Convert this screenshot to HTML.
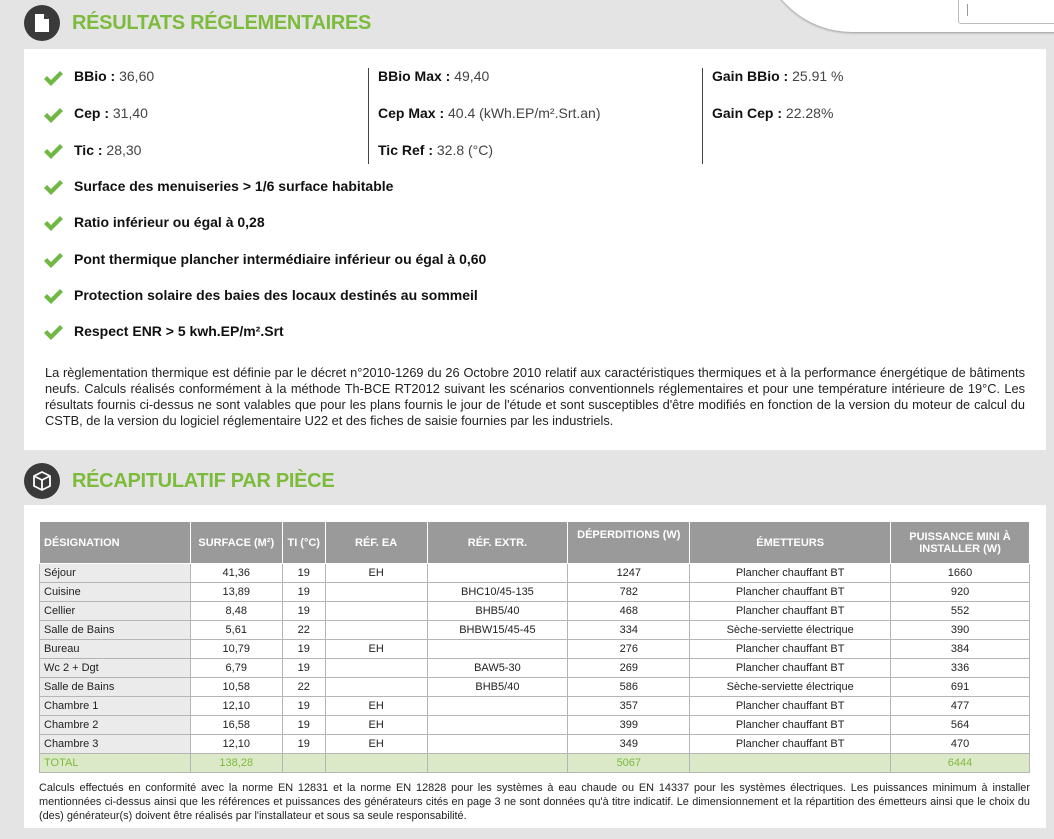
<!DOCTYPE html>
<html><head><meta charset="utf-8"><style>
body{margin:0;width:1054px;height:839px;background:#e4e4e4;font-family:"Liberation Sans",sans-serif;position:relative;overflow:hidden;color:#222}
.abs{position:absolute}
.title{position:absolute;font-size:20px;font-weight:bold;color:#7dbb3c;letter-spacing:-0.3px}
.icon{position:absolute;width:36px;height:36px;border-radius:50%;background:#3a3a3a}
.panel{position:absolute;background:#fff}
.row{position:absolute;font-size:14px;color:#222}
.row b{color:#111}
.row span{color:#444}
.chk{position:absolute;width:20px;height:16px}
p.note{position:absolute;margin:0;font-size:12.8px;line-height:16px;color:#222;text-align:justify}
table{position:absolute;border-collapse:collapse;font-size:11px;color:#222}
td,th{border:1px solid #b5b5b5;padding:0 4px;height:18px;text-align:center;white-space:nowrap;line-height:12px}
th{background:#9a9a9a;color:#fff;font-size:11px;font-weight:bold;height:34px;border-color:#fff;padding:0 4px}
td:first-child{text-align:left;background:#ebebeb}
tr.tot td{background:#dbe9c9;color:#7dbb3c}
</style></head><body>
<div class="abs" style="left:760px;top:-60px;width:300px;height:92px;background:#fff;border-radius:0 0 0 120px;box-shadow:0 1px 2px #999"></div>
<div class="abs" style="left:958px;top:-5px;width:100px;height:27px;background:#fff;border:1px solid #bbb;border-radius:3px"></div>
<div class="abs" style="left:967px;top:4px;width:1px;height:12px;background:#999"></div>

<div class="icon" style="left:24px;top:5px"></div>
<svg class="abs" style="left:33px;top:13px" width="18" height="20" viewBox="0 0 18 20"><path d="M2 1h9l5 5v13H2z" fill="#fff"/><path d="M11 1v5h5" fill="#3a3a3a"/></svg>
<div class="title" style="left:72px;top:12px">RÉSULTATS RÉGLEMENTAIRES</div>

<div class="panel" style="left:24px;top:49px;width:1022px;height:401px"></div>
<div class="abs" style="left:368px;top:68px;width:1px;height:96px;background:#444"></div>
<div class="abs" style="left:702px;top:68px;width:1px;height:96px;background:#444"></div>

<svg width="0" height="0" style="position:absolute"><defs><symbol id="c" viewBox="0 0 20 16"><path d="M1 9l3-3 4 4 9-9 3 3-12 12z" fill="#6fb843"/></symbol></defs></svg>
<svg class="chk" style="left:43px;top:70px"><use href="#c"/></svg>
<svg class="chk" style="left:43px;top:107px"><use href="#c"/></svg>
<svg class="chk" style="left:43px;top:143px"><use href="#c"/></svg>
<svg class="chk" style="left:43px;top:179px"><use href="#c"/></svg>
<svg class="chk" style="left:43px;top:215px"><use href="#c"/></svg>
<svg class="chk" style="left:43px;top:252px"><use href="#c"/></svg>
<svg class="chk" style="left:43px;top:288px"><use href="#c"/></svg>
<svg class="chk" style="left:43px;top:324px"><use href="#c"/></svg>

<div class="row" style="left:74px;top:68px"><b>BBio :</b> <span>36,60</span></div>
<div class="row" style="left:74px;top:105px"><b>Cep :</b> <span>31,40</span></div>
<div class="row" style="left:74px;top:142px"><b>Tic :</b> <span>28,30</span></div>
<div class="row" style="left:378px;top:68px"><b>BBio Max :</b> <span>49,40</span></div>
<div class="row" style="left:378px;top:105px"><b>Cep Max :</b> <span>40.4 (kWh.EP/m².Srt.an)</span></div>
<div class="row" style="left:378px;top:142px"><b>Tic Ref :</b> <span>32.8 (°C)</span></div>
<div class="row" style="left:712px;top:68px"><b>Gain BBio :</b> <span>25.91 %</span></div>
<div class="row" style="left:712px;top:105px"><b>Gain Cep :</b> <span>22.28%</span></div>
<div class="row" style="left:74px;top:178px"><b>Surface des menuiseries &gt; 1/6 surface habitable</b></div>
<div class="row" style="left:74px;top:214px"><b>Ratio inférieur ou égal à 0,28</b></div>
<div class="row" style="left:74px;top:251px"><b>Pont thermique plancher intermédiaire inférieur ou égal à 0,60</b></div>
<div class="row" style="left:74px;top:287px"><b>Protection solaire des baies des locaux destinés au sommeil</b></div>
<div class="row" style="left:74px;top:323px"><b>Respect ENR &gt; 5 kwh.EP/m².Srt</b></div>

<p class="note" style="left:45px;top:365px;width:980px">La règlementation thermique est définie par le décret n°2010-1269 du 26 Octobre 2010 relatif aux caractéristiques thermiques et à la performance énergétique de bâtiments neufs. Calculs réalisés conformément à la méthode Th-BCE RT2012 suivant les scénarios conventionnels réglementaires et pour une température intérieure de 19°C. Les résultats fournis ci-dessus ne sont valables que pour les plans fournis le jour de l'étude et sont susceptibles d'être modifiés en fonction de la version du moteur de calcul du CSTB, de la version du logiciel réglementaire U22 et des fiches de saisie fournies par les industriels.</p>

<div class="icon" style="left:24px;top:463px"></div>
<svg class="abs" style="left:31px;top:470px" width="22" height="22" viewBox="0 0 22 22" fill="none" stroke="#fff" stroke-width="1.8" stroke-linejoin="round"><path d="M11 2l8 4v10l-8 4-8-4V6z"/><path d="M3 6l8 4 8-4M11 10v10"/></svg>
<div class="title" style="left:72px;top:470px">RÉCAPITULATIF PAR PIÈCE</div>

<div class="panel" style="left:24px;top:505px;width:1022px;height:323px"></div>

<table style="left:39px;top:521px;width:991px">
<colgroup><col style="width:151px"><col style="width:92px"><col style="width:43px"><col style="width:102px"><col style="width:141px"><col style="width:122px"><col style="width:201px"><col style="width:139px"></colgroup>
<tr><th style="text-align:left">DÉSIGNATION</th><th>SURFACE (M²)</th><th>TI (°C)</th><th>RÉF. EA</th><th>RÉF. EXTR.</th><th style="vertical-align:top;padding-top:7px">DÉPERDITIONS (W)</th><th>ÉMETTEURS</th><th>PUISSANCE MINI À<br>INSTALLER (W)</th></tr>
<tr><td>Séjour</td><td>41,36</td><td>19</td><td>EH</td><td></td><td>1247</td><td>Plancher chauffant BT</td><td>1660</td></tr>
<tr><td>Cuisine</td><td>13,89</td><td>19</td><td></td><td>BHC10/45-135</td><td>782</td><td>Plancher chauffant BT</td><td>920</td></tr>
<tr><td>Cellier</td><td>8,48</td><td>19</td><td></td><td>BHB5/40</td><td>468</td><td>Plancher chauffant BT</td><td>552</td></tr>
<tr><td>Salle de Bains</td><td>5,61</td><td>22</td><td></td><td>BHBW15/45-45</td><td>334</td><td>Sèche-serviette électrique</td><td>390</td></tr>
<tr><td>Bureau</td><td>10,79</td><td>19</td><td>EH</td><td></td><td>276</td><td>Plancher chauffant BT</td><td>384</td></tr>
<tr><td>Wc 2 + Dgt</td><td>6,79</td><td>19</td><td></td><td>BAW5-30</td><td>269</td><td>Plancher chauffant BT</td><td>336</td></tr>
<tr><td>Salle de Bains</td><td>10,58</td><td>22</td><td></td><td>BHB5/40</td><td>586</td><td>Sèche-serviette électrique</td><td>691</td></tr>
<tr><td>Chambre 1</td><td>12,10</td><td>19</td><td>EH</td><td></td><td>357</td><td>Plancher chauffant BT</td><td>477</td></tr>
<tr><td>Chambre 2</td><td>16,58</td><td>19</td><td>EH</td><td></td><td>399</td><td>Plancher chauffant BT</td><td>564</td></tr>
<tr><td>Chambre 3</td><td>12,10</td><td>19</td><td>EH</td><td></td><td>349</td><td>Plancher chauffant BT</td><td>470</td></tr>
<tr class="tot"><td style="background:#dbe9c9">TOTAL</td><td>138,28</td><td></td><td></td><td></td><td>5067</td><td></td><td>6444</td></tr>
</table>

<p class="note" style="left:39px;top:781px;width:991px;font-size:10.9px;line-height:14px">Calculs effectués en conformité avec la norme EN 12831 et la norme EN 12828 pour les systèmes à eau chaude ou EN 14337 pour les systèmes électriques. Les puissances minimum à installer mentionnées ci-dessus ainsi que les références et puissances des générateurs cités en page 3 ne sont données qu'à titre indicatif. Le dimensionnement et la répartition des émetteurs ainsi que le choix du (des) générateur(s) doivent être réalisés par l'installateur et sous sa seule responsabilité.</p>
</body></html>
